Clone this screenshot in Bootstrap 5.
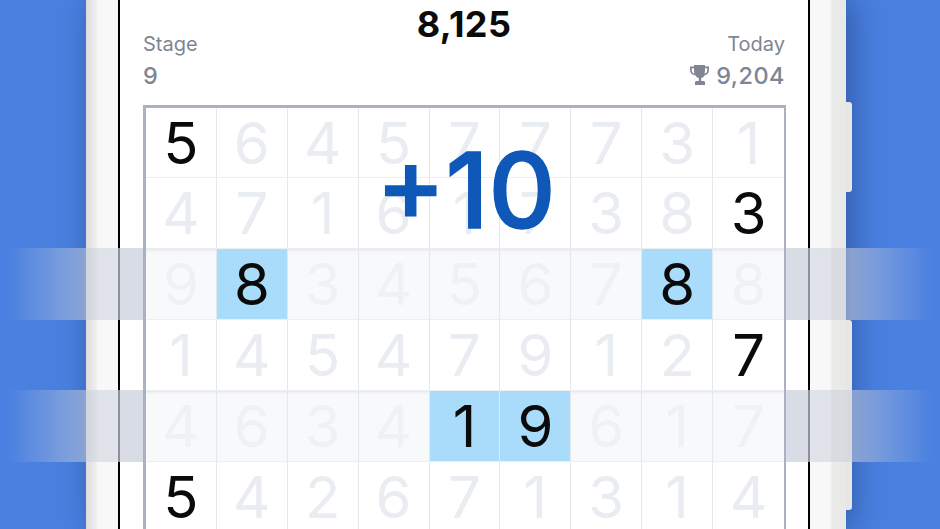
<!DOCTYPE html>
<html lang="en">
<head>
  <meta charset="UTF-8">
  <meta name="viewport" content="width=device-width, initial-scale=1.0">
  <title>Number Match</title>
  <link rel="stylesheet" href="https://cdn.jsdelivr.net/npm/bootstrap@5.3.0/dist/css/bootstrap.min.css">
  <style>
    html, body {
      height: 100%;
      overflow: hidden;
    }
    body {
      background-color: #4a80e0;
      font-family: 'Inter', 'Liberation Sans', sans-serif;
    }
    .stage {
      position: relative;
      width: 940px;
      height: 529px;
      overflow: hidden;
      padding-left: 86px;
    }
    .phone {
      position: relative;
      width: 760px;
      height: 529px;
      padding: 0 36px 0 32px;
      background: linear-gradient(90deg, #dcdcdc 0, #efefef 10px, #f8f8f8 12px, #f8f8f8 744px, #eaeae8 746px, #e8e8e6 760px);
      box-shadow: 6px 0 30px rgba(20, 50, 110, .5);
    }
    .side-btn {
      position: absolute;
      left: 760px;
      width: 6px;
      background: #e6e6e4;
      border-radius: 0 3px 3px 0;
    }
    .btn-top { top: 102px; height: 90px; }
    .btn-low { top: 320px; height: 190px; }
    .screen {
      height: 529px;
      background: #fff;
      border-left: 2px solid #000;
      border-right: 2px solid #000;
      padding: 0 23px 0 23px;
    }
    .score {
      font-size: 36px;
      line-height: 38px;
      padding-top: 5px;
      font-weight: 700;
      color: #0b0b0b;
      letter-spacing: .4px;
    }
    .stat-head {
      height: 62px;
      margin-top: -15px;
      color: #7f8592;
      font-size: 20px;
      line-height: 32px;
    }
    .stat-num {
      font-weight: 500;
      font-size: 23.5px;
      letter-spacing: .5px;
    }
    .trophy {
      width: 19px;
      height: 21px;
      margin-right: 7px;
      vertical-align: -2px;
    }
    .board {
      position: relative;
      z-index: 2;
      margin-top: 15px;
      margin-right: -1px;
      display: grid;
      grid-template-columns: repeat(9, 1fr);
      grid-template-rows: 70px;
      grid-auto-rows: 71px;
      border-top: 3px solid #a9b1c2;
      border-left: 3px solid #a9b1c2;
      border-right: 2px solid #a9b1c2;
      background: #fff;
    }
    .tile {
      display: flex;
      align-items: center;
      justify-content: center;
      font-size: 58px;
      line-height: 1;
      color: #e9ecf1;
      border-right: 1.5px solid #e4e7ee;
      border-bottom: 1.5px solid #eceef2;
    }
    .tile:nth-child(9n+1) { border-right: 0; }
    .tile.dim {
      background: #f8f9fb;
      color: #eff1f5;
      box-shadow: inset 0 3px 3px -2px rgba(150, 158, 175, .25);
    }
    .tile.lit { color: #0a0a0a; }
    .tile.pick {
      background: #a9dcfb;
      color: #0a0a0a;
      box-shadow: none;
    }
    .gain {
      position: absolute;
      z-index: 3;
      top: 19px;
      left: 230px;
      font-size: 104px;
      line-height: 126px;
      font-weight: 500;
      -webkit-text-stroke: 1.5px #0f58b8;
      color: #0f58b8;
    }
    .band {
      position: absolute;
      z-index: 1;
      left: 0;
      width: 940px;
      height: 72px;
      background: linear-gradient(90deg,
        rgba(200, 205, 218, 0) 8px,
        rgba(200, 205, 218, .55) 86px,
        rgba(200, 205, 218, .5) 87px,
        rgba(200, 205, 218, .5) 118px,
        rgba(200, 205, 218, .7) 118px,
        rgba(200, 205, 218, .7) 810px,
        rgba(200, 205, 218, .5) 810px,
        rgba(200, 205, 218, .5) 846px,
        rgba(200, 205, 218, .55) 852px,
        rgba(200, 205, 218, 0) 932px);
    }
    .band-a { top: 248px; }
    .band-b { top: 390px; }
  </style>
</head>
<body>
  <div class="stage">
    <div class="phone">
      <div class="side-btn btn-top"></div>
      <div class="side-btn btn-low"></div>
      <div class="screen">
        <div class="score text-center">8,125</div>
        <div class="stat-head d-flex justify-content-between">
          <div>
            <div>Stage</div>
            <div class="stat-num">9</div>
          </div>
          <div class="text-end">
            <div>Today</div>
            <div class="stat-num">
              <svg class="trophy" viewBox="0 0 19 21" fill="#7f8592"><path d="M4 0h11v1.500h4V5c0 3-2 5-4.600 5.400-.7 1.400-1.900 2.400-3.200 2.700V16h2.300c1 0 1.500.7 1.500 1.600V20H5v-2.400c0-.9.500-1.600 1.500-1.600h2.300v-2.900c-1.300-.3-2.500-1.300-3.200-2.700C2 10 0 8 0 5V1.500h4zM1.700 3.200V5c0 1.900 1.100 3.300 2.700 3.700C4.100 7.500 4 6.200 4 3.200zm15.600 0H15c0 3-.1 4.300-.4 5.500 1.600-.4 2.700-1.800 2.700-3.700z"/></svg>9,204
            </div>
          </div>
        </div>
        <div class="board" id="board">
          <div class="gain">+10</div>
        </div>
      </div>
    </div>
    <div class="band band-a"></div>
    <div class="band band-b"></div>
  </div>

  <script src="https://cdn.jsdelivr.net/npm/bootstrap@5.3.0/dist/js/bootstrap.bundle.min.js"></script>
  <script>
    const rows = ['564577731', '471617383', '983456788', '145479127', '463419617', '542671314'];
    const lit = { 0: [0], 1: [8], 3: [8], 5: [0] };
    const picks = { 2: [1, 7], 4: [4, 5] };
    const board = document.getElementById('board');

    board.insertAdjacentHTML('beforeend', rows.map((row, r) =>
      [...row].map((digit, c) => {
        let cls = 'tile';
        if ((lit[r] || []).includes(c)) cls += ' lit';
        if (r === 2 || r === 4) cls += ' dim';
        if ((picks[r] || []).includes(c)) cls += ' pick';
        return `<div class="${cls}">${digit}</div>`;
      }).join('')
    ).join(''));
  </script>
</body>
</html>
